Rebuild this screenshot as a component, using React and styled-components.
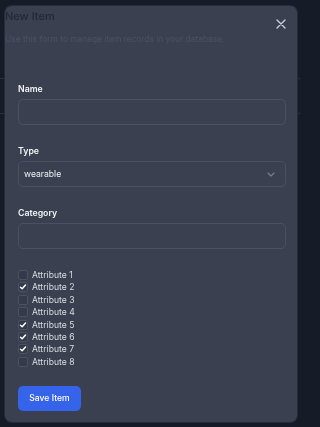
import React from "react";
import styled, { createGlobalStyle } from "styled-components";

const Global = createGlobalStyle`
  html, body { margin: 0; padding: 0; background: #161b28; }
  body { font-family: Inter, "Noto Sans", sans-serif; width: 300px; height: 427px; overflow: hidden; }
  * { box-sizing: border-box; }
`;

const Page = styled.div`
  height: 427px;
  display: flex;
  flex-direction: column;
  padding-top: 78px;
`;

const PageRow = styled.div`
  height: 35px;
  border-top: 1px solid #2b3140;
`;

const Dialog = styled.div`
  position: fixed;
  left: 5px;
  top: 6px;
  width: 292px;
  height: 416px;
  background: #3a4050;
  border-radius: 7px;
  box-shadow: 0 0 0 1px #262c3a;
  display: flex;
  flex-direction: column;
`;

const Header = styled.div`
  display: flex;
  flex-direction: column;
  gap: 9px;
  padding-top: 2px;
`;

const Title = styled.h2`
  margin: 0;
  font-size: 11px;
  font-weight: 500;
  color: #222837;
  line-height: 16px;
`;

const Desc = styled.p`
  margin: 0;
  font-size: 8.4px;
  color: #4a5164;
  line-height: 12px;
`;

const Close = styled.button`
  position: absolute;
  right: 10px;
  top: 12px;
  width: 12px;
  height: 12px;
  padding: 0;
  border: 0;
  background: none;
  display: flex;
  align-items: center;
  justify-content: center;
`;

const Form = styled.div`
  display: flex;
  flex-direction: column;
  padding: 38px 11px 0 13px;
`;

const Field = styled.div`
  display: flex;
  flex-direction: column;
  gap: 4px;
  margin-bottom: 20px;
`;

const Label = styled.label`
  font-size: 8.75px;
  font-weight: 600;
  color: #f3f4f6;
  line-height: 12px;
`;

const Input = styled.div`
  height: 26px;
  border: 1px solid #4a5163;
  border-radius: 5px;
  display: flex;
  align-items: center;
  justify-content: space-between;
  padding: 0 10px 0 5px;
  font-size: 8.6px;
  color: #eef0f3;
`;

const Checks = styled.div`
  display: flex;
  flex-direction: column;
  gap: 2.4px;
  margin-top: 1px;
`;

const CheckRow = styled.div`
  display: flex;
  align-items: center;
  gap: 4px;
  height: 10px;
  font-size: 8.6px;
  color: #d9dce2;
`;

const Box = styled.span`
  width: 10px;
  height: 10px;
  border: 1px solid #4a5163;
  border-radius: 2px;
  background: #343a49;
  display: flex;
  align-items: center;
  justify-content: center;
`;

const Save = styled.button`
  margin-top: 19px;
  align-self: flex-start;
  width: 63px;
  height: 25px;
  border: 0;
  border-radius: 5px;
  background: #3563e9;
  color: #ffffff;
  font-family: Inter, sans-serif;
  font-size: 8.6px;
  font-weight: 500;
  padding: 0;
`;

const attrs = [false, true, false, false, true, true, true, false];

export default function App() {
  return (
    <>
      <Global />
      <Page>
        <PageRow />
        <PageRow />
      </Page>
      <Dialog>
        <Header>
          <Title>New Item</Title>
          <Desc>Use this form to manage item records in your database.</Desc>
        </Header>
        <Close aria-label="Close">
          <svg width="10" height="10" viewBox="0 0 10 10">
            <path d="M1 1L9 9M9 1L1 9" stroke="#c9cdd5" strokeWidth="1.4" strokeLinecap="round" />
          </svg>
        </Close>
        <Form>
          <Field>
            <Label>Name</Label>
            <Input />
          </Field>
          <Field>
            <Label>Type</Label>
            <Input>
              <span>wearable</span>
              <svg width="8" height="5" viewBox="0 0 8 5">
                <path d="M1 1L4 4L7 1" stroke="#7b8190" strokeWidth="1.1" fill="none" strokeLinecap="round" strokeLinejoin="round" />
              </svg>
            </Input>
          </Field>
          <Field>
            <Label>Category</Label>
            <Input />
          </Field>
          <Checks>
            {attrs.map((c, i) => (
              <CheckRow key={i}>
                <Box>
                  {c && (
                    <svg width="8" height="8" viewBox="0 0 8 8">
                      <path d="M1.5 4.2L3.2 5.8L6.5 2" stroke="#ffffff" strokeWidth="1.5" fill="none" strokeLinecap="round" strokeLinejoin="round" />
                    </svg>
                  )}
                </Box>
                Attribute {i + 1}
              </CheckRow>
            ))}
          </Checks>
          <Save>Save Item</Save>
        </Form>
      </Dialog>
    </>
  );
}
